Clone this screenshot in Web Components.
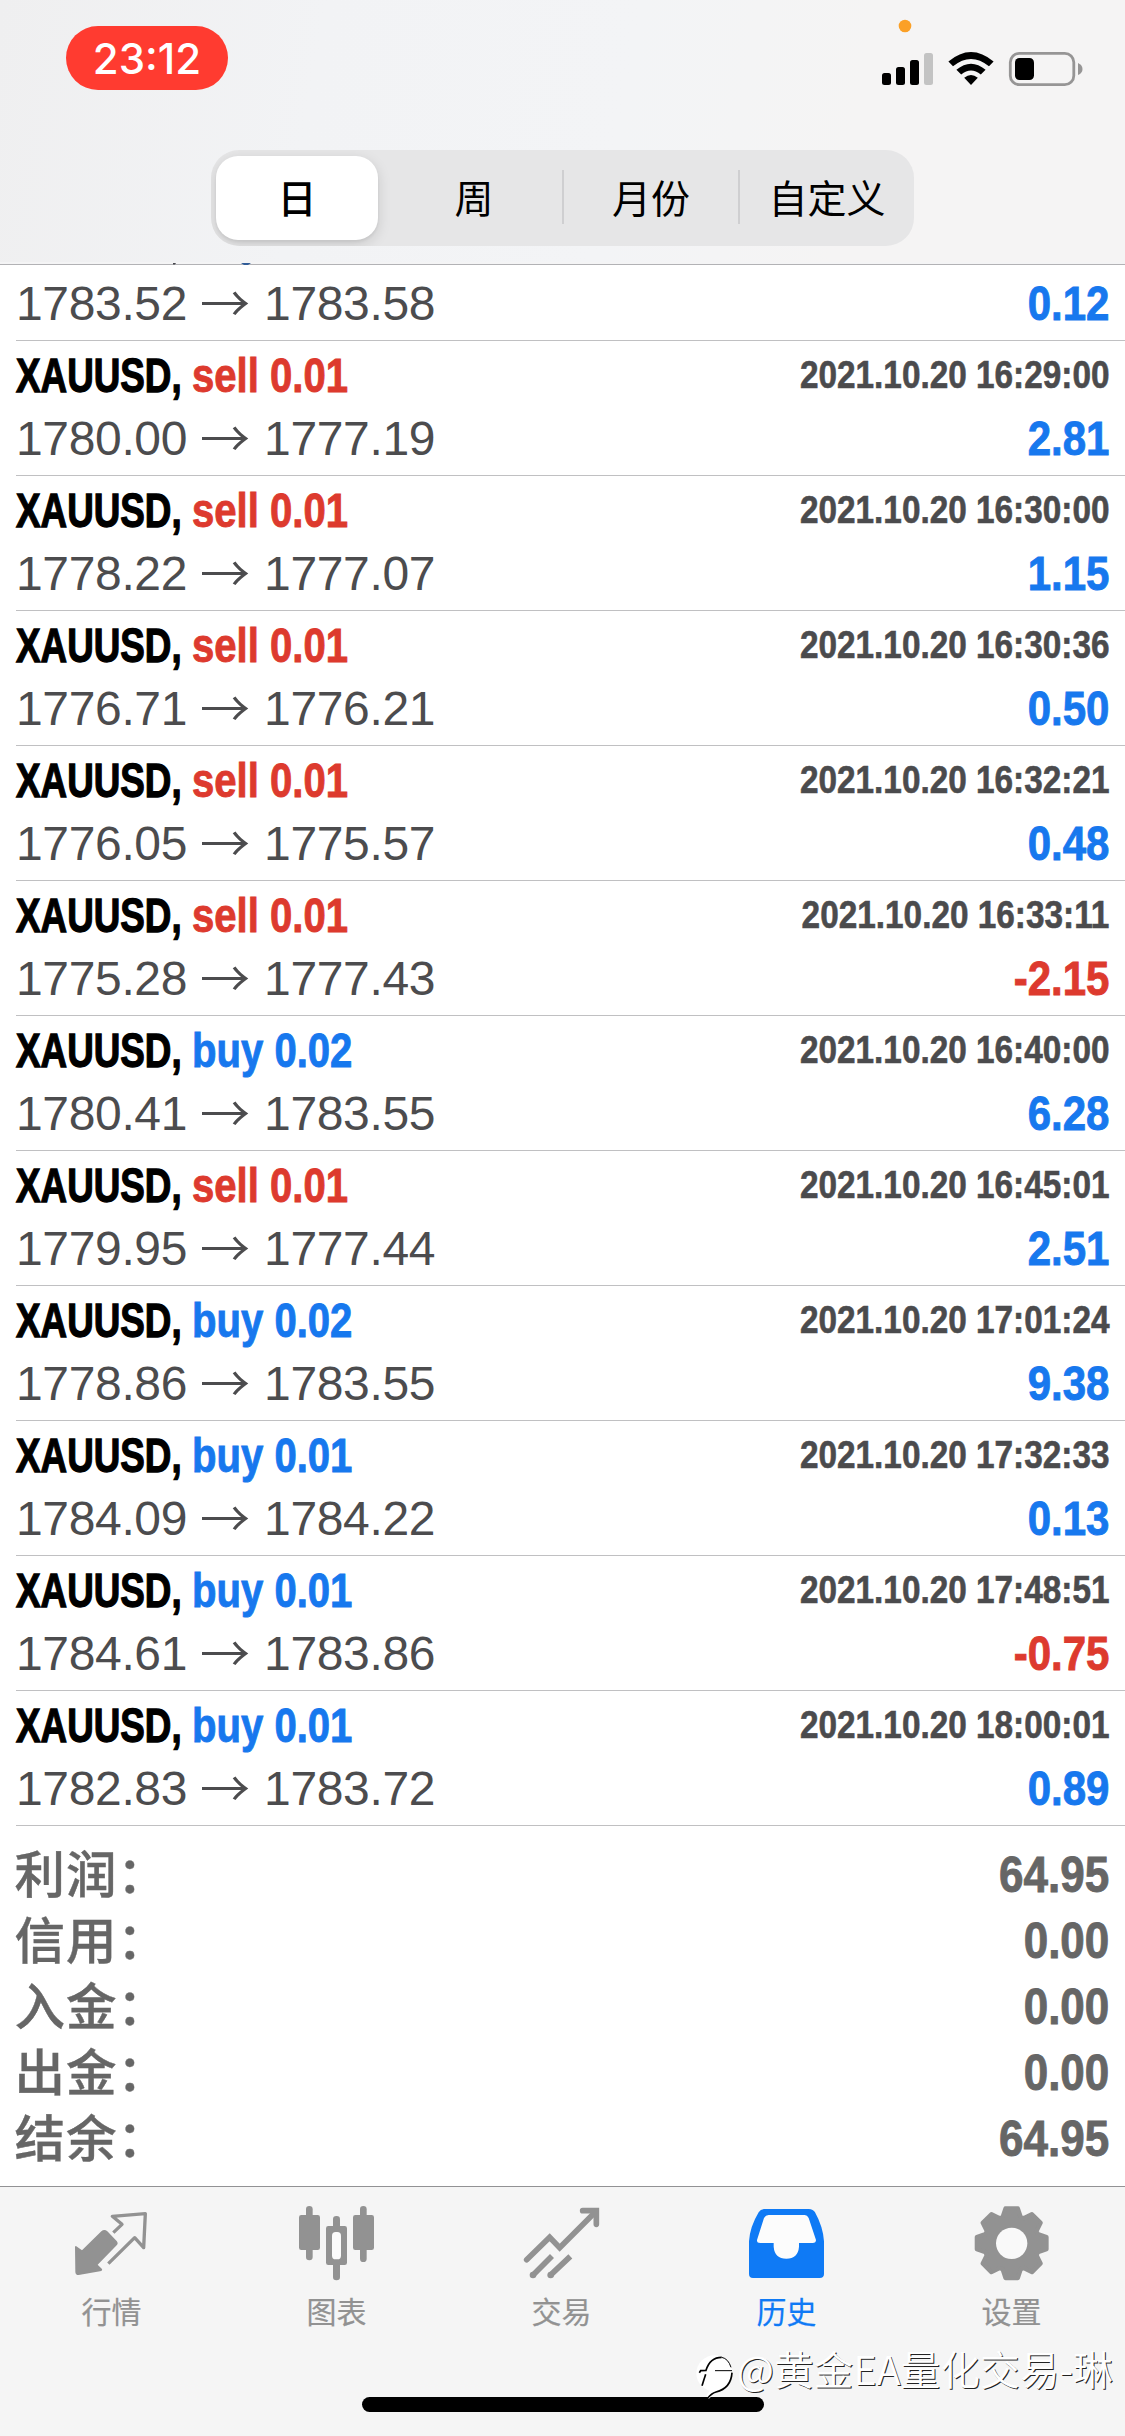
<!DOCTYPE html>
<html lang="zh-CN">
<head>
<meta charset="utf-8">
<title>历史</title>
<style>
html,body{margin:0;padding:0;background:#fff}
body{width:1125px;height:2436px;overflow:hidden;font-family:"Liberation Sans","Noto Sans CJK SC",sans-serif}
</style>
</head>
<body>
<history-app></history-app>
<script>
const define = (name, html) => customElements.define(name, class extends HTMLElement {
  constructor() {
    super();
    this.attachShadow({ mode: 'open' });
  }
  connectedCallback() {
    this.shadowRoot.innerHTML = typeof html === 'function' ? html(this) : html;
  }
});

define('status-bar', `
<style>
:host{display:flex;justify-content:space-between;height:124px;padding:26px 42px 0 66px;box-sizing:border-box}
.time{width:162px;height:64px;border-radius:32px;background:#ff3b30;color:#fff;font:500 42px/65px Inter,sans-serif;text-align:center}
svg{display:block;margin-top:-14px}
</style>
<div class="time">23:12</div>
<svg width="205" height="76" viewBox="878 12 205 76">
<circle cx="905" cy="26" r="6.3" fill="#fba026"/>
<rect x="882" y="73" width="9" height="12" rx="2.5"/><rect x="896" y="67" width="9" height="18" rx="2.5"/>
<rect x="910" y="60" width="9" height="25" rx="2.5"/><rect x="924" y="53" width="9" height="32" rx="2.5" fill="#c3c3c3"/>
<path d="M948.4 61.5Q971 42.500 993.600 61.500L989 66.300Q971 51.500 953 66.300Z"/>
<path d="M956.400 69.800Q971 57.500 985.600 69.800L980.800 74.500Q971 66.500 961.200 74.500Z"/>
<path d="M964.200 77.800Q971 72 977.800 77.800L971 85Z"/>
<rect x="1010.300" y="53.300" width="63.500" height="31.400" rx="9" fill="none" stroke="#969595" stroke-width="2.800"/>
<rect x="1015" y="58" width="19" height="22" rx="4.500"/>
<path d="M1078 63Q1082.500 65 1082.500 69T1078 75Z" fill="#969595"/>
</svg>`);

define('segment-item', `
<style>
:host{flex:1;display:flex;align-items:center;justify-content:center;position:relative;font:400 39px/1 "Noto Sans CJK SC",sans-serif;color:#000;height:84px;border-radius:22px}
:host([selected]){background:#fff;font-weight:500;flex:0 0 162px;margin-right:8px;box-shadow:0 4px 14px rgba(0,0,0,.13),0 2px 3px rgba(0,0,0,.06)}
:host([divided])::before{content:"";position:absolute;left:0;top:14px;width:2px;height:54px;background:#cfcfd1}
span{transform:translateY(-2px)}
:host([divided]) span{transform:translate(1px,-2px)}
</style><span><slot></slot></span>`);

define('segmented-control', `
<style>
:host{display:flex;align-items:center;width:703px;height:96px;margin:0 auto;padding:0 0 0 5px;box-sizing:border-box;background:#e6e6e7;border-radius:28px;overflow:hidden}
</style><slot></slot>`);

define('app-header', `
<style>
:host{display:block;height:262px;background:linear-gradient(100deg,#efeff0 0,#f2f3f5 28%,#f3f4f6 55%,#f5f4f4 75%,#f5f4f4)}
.tabs{padding-top:26px}
</style>
<status-bar></status-bar>
<div class="tabs"><segmented-control>
<segment-item selected>日</segment-item><segment-item>周</segment-item><segment-item divided>月份</segment-item><segment-item divided>自定义</segment-item>
</segmented-control></div>`);

define('deal-row', el => {
  const [side, vol, date, from, to, amt] = ['side', 'vol', 'date', 'from', 'to', 'amt'].map(k => el.getAttribute(k));
  const head = side ? `<div class="top"><span class="sym">XAUUSD,</span><span class="side ${side}">${side} ${vol}</span><span class="date">${date}</span></div>` : '';
  return `
<style>
:host{display:flex;flex-direction:column;margin-left:16px;padding-right:16px;border-top:1px solid #c0c0c2;height:134px;font-size:48px;white-space:nowrap}
:host([partial]){border:0;padding-top:13px;height:65px}
.top{display:flex;height:69px;line-height:69px;font-weight:700}
.sym{width:176px;transform:scaleX(.767);transform-origin:0 50%;color:#000;-webkit-text-stroke:1.300px #000}
.side{transform:scaleX(.835);transform-origin:0 50%;-webkit-text-stroke:.900px currentColor}
.sell{color:#dd3a2e}.buy{color:#1778ee}
.date{margin-left:auto;font-size:38.500px;line-height:67px;color:#4b4b4d;transform:scaleX(.866);transform-origin:100% 50%;-webkit-text-stroke:.600px currentColor}
.bot{display:flex;justify-content:space-between;height:57px;line-height:57px;color:#4c4c4e}
.price{display:flex;letter-spacing:-.350px}
.arrow{font:350 50px/57px "Noto Sans CJK SC",sans-serif;letter-spacing:0;margin:0 14px 0 13px;transform:translateY(-3px)}
.amt{font-weight:700;color:#1778ee;transform:scaleX(.875);transform-origin:100% 50%;-webkit-text-stroke:.900px currentColor}
.amt.neg{color:#dd3a2e}
</style>${head}
<div class="bot"><span class="price"><span>${from}</span><span class="arrow">→</span><span>${to}</span></span><span class="amt ${amt < 0 ? 'neg' : ''}">${amt}</span></div>`;
});

define('deal-list', `
<style>
:host{display:block;background:linear-gradient(#f4f4f5 0 2px,#b2b2b5 2px 3px,#fff 3px);position:relative}
.peek{position:absolute;left:170px;top:0}
</style>
<svg class="peek" width="84" height="3" viewBox="170 262 84 3"><path d="M173 263h3l-1 1.500h-2z" fill="#45454c"/><path d="M241 263h10l-3 2h-4z" fill="#2f5c98"/></svg>
<slot></slot>`);

define('summary-line', el => `
<style>
:host{display:flex;justify-content:space-between;height:66px;line-height:66px;color:#666}
.l{font:500 50.500px/66px "Noto Sans CJK SC",sans-serif;letter-spacing:.900px;transform:translate(-1.500px,-4px);-webkit-text-stroke:.400px currentColor}
.v{font-weight:700;font-size:50px;transform:scaleX(.88);transform-origin:100% 50%;-webkit-text-stroke:.900px currentColor}
</style><span class="l"><slot></slot></span><span class="v">${el.getAttribute('value')}</span>`);

define('account-summary', `
<style>:host{display:block;height:344px;margin-left:16px;padding:16px 16px 0 0;border-top:1px solid #c0c0c2}</style><slot></slot>`);

const gear = (() => {
  const pts = [];
  for (let i = 0; i < 8; i++) {
    for (const [off, r] of [[-19, 83], [-10, 106], [10, 106], [19, 83]]) {
      const a = (i * 45 + off - 90) * Math.PI / 180;
      pts.push((995 + r * Math.cos(a)).toFixed(1) + ',' + (189.5 + r * Math.sin(a)).toFixed(1));
    }
  }
  return `<polygon points="${pts.join(' ')}" fill="currentColor" stroke="currentColor" stroke-width="13" stroke-linejoin="round"/><circle cx="995" cy="190" r="47" fill="#f9f9f9"/>`;
})();

const icons = {
  quotes: [0, `<path fill="currentColor" d="M225 201Q226 196 231 200L246 211L304 154Q313 146 322 154L350 183Q356 190 350 196L293 254L306 267Q308 272 300 274L236 285Q226 285 226 275Z"/><path fill="none" stroke="currentColor" stroke-width="10" stroke-linejoin="round" d="M340 158L366 133L337 109L436 101L431 203L404 173L325 251"/>`],
  chart: [675, `<g fill="currentColor"><rect x="918" y="78" width="20" height="163" rx="10"/><rect x="897" y="105" width="63" height="105" rx="7"/><rect x="999" y="108" width="21" height="193" rx="10"/><rect x="978" y="138" width="63" height="117" rx="7"/><rect x="1080" y="78" width="20" height="168" rx="10"/><rect x="1059" y="105" width="63" height="105" rx="7"/></g><rect x="996" y="156" width="27" height="82" rx="11" fill="#fbfbfb"/>`],
  trade: [150, `<g fill="none" stroke="currentColor" stroke-width="17"><path stroke-linecap="round" stroke-linejoin="miter" d="M380 239L449 172L479 203L586 96"/><path stroke-linecap="round" d="M548 92H589V133"/><path d="M400 284L456 228M453 284L511 229"/></g><g fill="currentColor"><circle cx="399" cy="285" r="10"/><circle cx="452" cy="285" r="10"/></g>`],
  history: [-15, `<path fill="currentColor" d="M252 87H386Q400 88 405 97Q429 140 432 184V282Q432 294 419 294H219Q207 294 207 282V184Q210 140 236 97Q241 88 252 87Z"/><path fill="#fcfcfc" d="M266 105H374Q382 105 386 114L408 180Q408 189 398 189H357V200Q354 236 319 236Q284 236 281 200V189H241Q230 189 231 180L252 114Q257 105 266 105Z"/>`],
  settings: [660, gear]
};

define('tab-item', el => {
  const [x, art] = icons[el.getAttribute('icon')];
  return `
<style>
:host{display:flex;flex-direction:column;align-items:center;flex:1;color:#929292;font:400 30px/40px "Noto Sans CJK SC",sans-serif;-webkit-text-stroke:.200px currentColor}
:host([active]){color:#0f7af5}
svg{display:block}
span{margin-top:4px;transform:translate(-1px,-1px)}
</style>
<svg width="225" height="100" viewBox="${x} 21 675 300">${art}</svg><span><slot></slot></span>`;
});

define('tab-bar', `
<style>
:host{display:flex;flex-direction:column;justify-content:space-between;height:249px;border-top:1px solid #929294;background:#f5f5f5}
nav{display:flex}
.home{width:402px;height:15px;border-radius:8px;background:#000;margin:0 0 24px 362px}
</style><nav><slot></slot></nav><div class="home"></div>`);

define('water-mark', `
<style>
:host{position:absolute;left:695px;top:2345px;display:flex;align-items:center;gap:4px;height:54px;color:#fff;font:350 39.500px/54px "Noto Sans CJK SC",sans-serif;white-space:nowrap;text-shadow:1px 1px 0 #222}
svg{display:block}
span{transform:translateY(-4px);letter-spacing:.200px}
</style>
<svg width="38" height="54" viewBox="45 495 114 162"><circle cx="103" cy="580" r="54" fill="#fff"/><path d="M80 644Q96 619 125 622L104 640L86 657Z" fill="#fff"/><g fill="none" stroke="#000" stroke-width="5"><path d="M58 578L62 572L78 571Q90 532 125 532"/><path d="M125 532Q145 536 153 562" stroke-width="3"/><path d="M156 578Q153 625 108 636Q94 640 83 655"/><path d="M105 572H156" stroke-width="3"/><path d="M77 583L66 617"/></g></svg>
<span><slot></slot></span>`);

const deals = [
  ['sell', '0.01', '16:29:00', '1780.00', '1777.19', '2.81'],
  ['sell', '0.01', '16:30:00', '1778.22', '1777.07', '1.15'],
  ['sell', '0.01', '16:30:36', '1776.71', '1776.21', '0.50'],
  ['sell', '0.01', '16:32:21', '1776.05', '1775.57', '0.48'],
  ['sell', '0.01', '16:33:11', '1775.28', '1777.43', '-2.15'],
  ['buy', '0.02', '16:40:00', '1780.41', '1783.55', '6.28'],
  ['sell', '0.01', '16:45:01', '1779.95', '1777.44', '2.51'],
  ['buy', '0.02', '17:01:24', '1778.86', '1783.55', '9.38'],
  ['buy', '0.01', '17:32:33', '1784.09', '1784.22', '0.13'],
  ['buy', '0.01', '17:48:51', '1784.61', '1783.86', '-0.75'],
  ['buy', '0.01', '18:00:01', '1782.83', '1783.72', '0.89']
];

define('history-app', `
<style>:host{display:block;width:1125px;height:2436px;background:#fff;position:relative;overflow:hidden}</style>
<app-header></app-header>
<deal-list><deal-row partial from="1783.52" to="1783.58" amt="0.12"></deal-row>${deals.map(([s, v, d, f, t, a]) =>
  `<deal-row side="${s}" vol="${v}" date="2021.10.20 ${d}" from="${f}" to="${t}" amt="${a}"></deal-row>`).join('')}</deal-list>
<account-summary>
<summary-line value="64.95">利润：</summary-line><summary-line value="0.00">信用：</summary-line><summary-line value="0.00">入金：</summary-line><summary-line value="0.00">出金：</summary-line><summary-line value="64.95">结余：</summary-line>
</account-summary>
<tab-bar>
<tab-item icon="quotes">行情</tab-item><tab-item icon="chart">图表</tab-item><tab-item icon="trade">交易</tab-item><tab-item icon="history" active>历史</tab-item><tab-item icon="settings">设置</tab-item>
</tab-bar>
<water-mark>@黄金EA量化交易-琳</water-mark>`);
</script>
</body>
</html>
